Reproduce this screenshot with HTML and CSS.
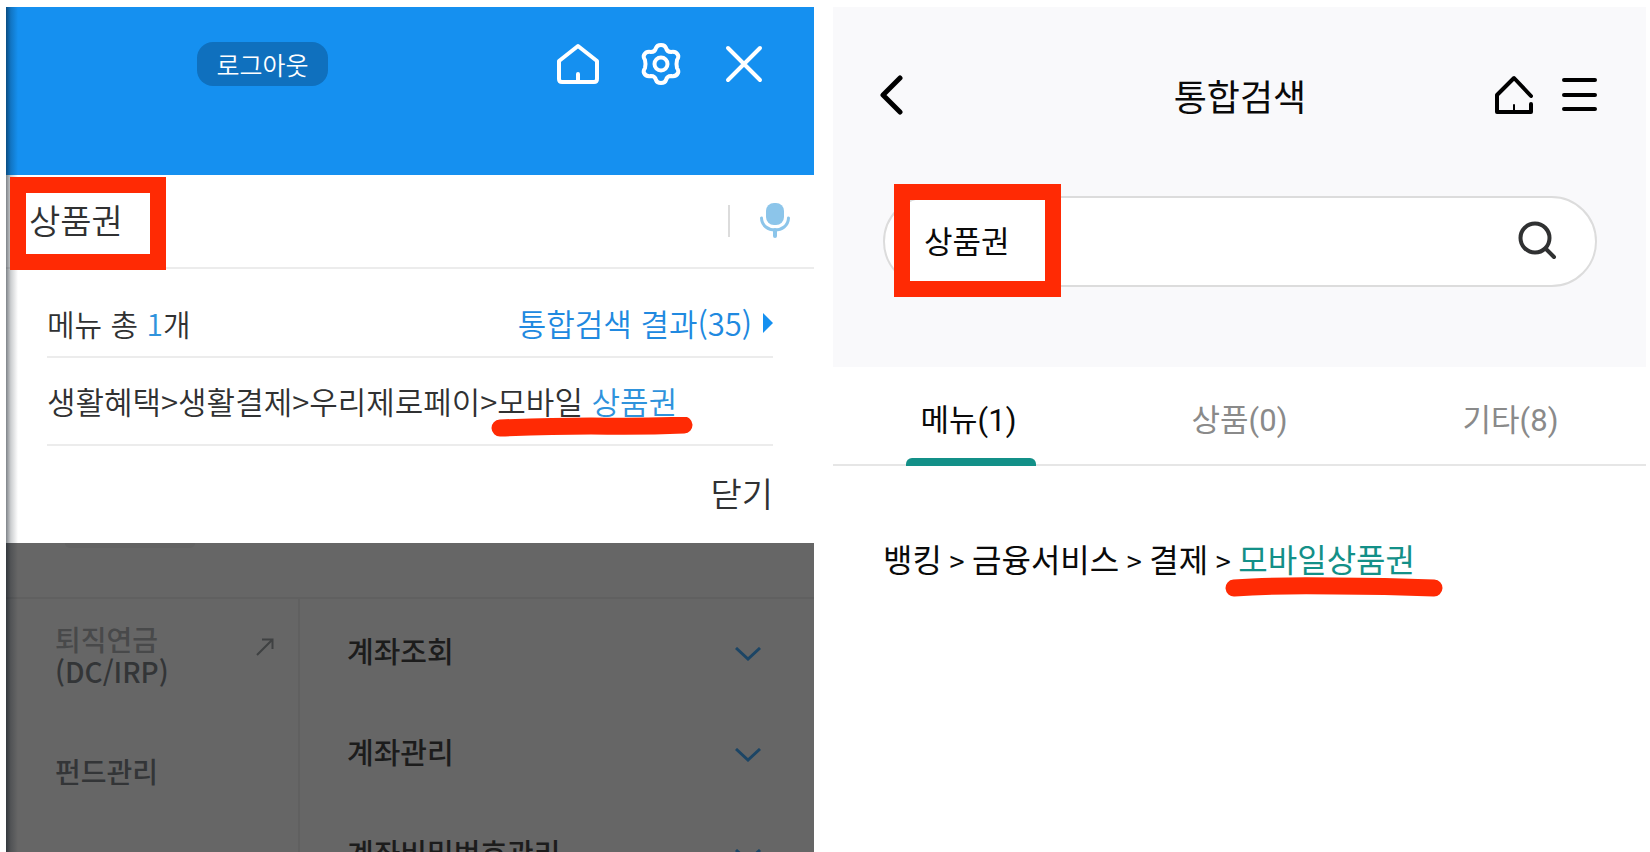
FILE: index.html
```
<!DOCTYPE html>
<html lang="ko">

<head>
    <meta charset="UTF-8">
    <meta name="viewport" content="width=device-width, initial-scale=1.0">
    <title>상품권 메뉴 검색</title>
    <link rel="stylesheet" href="styles.css">
</head>

<body>
    <div class="screens">
        <section class="screen menu-screen">
            <header class="menu-header">
                <button class="logout">로그아웃</button>
                <nav class="menu-icons">
                    <button class="icon-button" aria-label="홈">
                        <svg width="42" height="42" viewBox="0 0 42 42" fill="none" stroke="#fff" stroke-width="4" stroke-linecap="round" stroke-linejoin="round">
                            <path d="M21 3 L40 18 V36 Q40 39 37 39 H5 Q2 39 2 36 V18 Z M21 31 V38" />
                        </svg>
                    </button>
                    <button class="icon-button" aria-label="설정">
                        <svg width="42" height="42" viewBox="0 0 42 42" fill="none" stroke="#fff" stroke-width="4" stroke-linejoin="round">
                            <path d="M16 5 Q17 2 21 2 Q25 2 26 5 Q27 9 31 9 Q36 8 38 12 Q39 14 37 17 Q36 21 37 25 Q39 28 38 30 Q36 34 31 33 Q27 33 26 37 Q25 40 21 40 Q17 40 16 37 Q15 33 11 33 Q6 34 4 30 Q3 28 5 25 Q6 21 5 17 Q3 14 4 12 Q6 8 11 9 Q15 9 16 5 Z" />
                            <circle cx="21" cy="21" r="6.5" />
                        </svg>
                    </button>
                    <button class="icon-button" aria-label="닫기">
                        <svg width="42" height="42" viewBox="0 0 42 42" fill="none" stroke="#fff" stroke-width="4" stroke-linecap="round">
                            <path d="M5 5 L37 37 M37 5 L5 37" />
                        </svg>
                    </button>
                </nav>
            </header>

            <form class="menu-search">
                <input class="menu-input" type="text" value="상품권" aria-label="메뉴 검색">
                <button class="mic-button" type="button" aria-label="음성 검색">
                    <svg width="32" height="36" viewBox="0 0 32 36" fill="none" stroke="#8cc5ea" stroke-width="3" stroke-linecap="round">
                        <rect x="7" y="0" width="18" height="22" rx="8" fill="#8cc5ea" stroke="none" />
                        <path d="M2.500 15 C3 31 29 31 29.500 15" />
                        <path d="M16 27 V33" stroke-width="4" />
                    </svg>
                </button>
                <span class="mark-box menu-mark"></span>
            </form>

            <div class="menu-results">
                <div class="result-head">
                    <span class="menu-count">메뉴 총 <em>1</em>개</span>
                    <a class="total-link" href="#">통합검색 결과(35)
                        <svg width="10" height="20" viewBox="0 0 10 20" fill="#1590f0"><path d="M0 0 L10 10 L0 20 Z" /></svg>
                    </a>
                </div>
                <a class="result-path" href="#">생활혜택&gt;생활결제&gt;우리제로페이&gt;<span class="marked">모바일 <em>상품권</em>
                        <svg class="underline menu-underline" width="202" height="20" viewBox="0 0 202 20" fill="none" stroke="#ff2a04" stroke-width="17" stroke-linecap="round" stroke-linejoin="round">
                            <path d="M9 11 Q60 9 100 9 Q150 10 193 8" />
                        </svg></span></a>
                <div class="result-close">
                    <button class="close-text">닫기</button>
                </div>
            </div>

            <div class="dimmed">
                <div class="dimmed-top"></div>
                <div class="dimmed-body">
                    <ul class="categories">
                        <li><a href="#"><span class="faded">퇴직연금</span><br>(DC/IRP)</a>
                            <svg width="18" height="18" viewBox="0 0 18 18" fill="none" stroke="#3f4142" stroke-width="2"><path d="M1 17 L16 2 M6 1.500 H16.500 V11" /></svg>
                        </li>
                        <li><a href="#">펀드관리</a></li>
                    </ul>
                    <ul class="submenus">
                        <li><a href="#">계좌조회</a>
                            <svg width="26" height="14" viewBox="0 0 26 14" fill="none" stroke="#1c4565" stroke-width="3"><path d="M1 1 L13 12 L25 1" /></svg>
                        </li>
                        <li><a href="#">계좌관리</a>
                            <svg width="26" height="14" viewBox="0 0 26 14" fill="none" stroke="#1c4565" stroke-width="3"><path d="M1 1 L13 12 L25 1" /></svg>
                        </li>
                        <li><a href="#">계좌비밀번호관리</a>
                            <svg width="26" height="14" viewBox="0 0 26 14" fill="none" stroke="#1c4565" stroke-width="3"><path d="M1 1 L13 12 L25 1" /></svg>
                        </li>
                    </ul>
                </div>
            </div>
        </section>

        <section class="screen search-screen">
            <div class="search-top">
                <header class="search-header">
                    <button class="back-button" aria-label="뒤로">
                        <svg width="24" height="42" viewBox="0 0 24 42" fill="none" stroke="#000" stroke-width="5" stroke-linecap="round" stroke-linejoin="round">
                            <path d="M20 4 L3 21 L20 38" />
                        </svg>
                    </button>
                    <h1 class="search-title">통합검색</h1>
                    <nav class="search-icons">
                        <button class="icon-button" aria-label="홈">
                            <svg width="40" height="40" viewBox="0 0 40 40" fill="none" stroke="#000" stroke-width="4" stroke-linecap="round" stroke-linejoin="round">
                                <path d="M38 21 L21 3 L4 20 V37 H38 V29" />
                                <path d="M21 30 V36" stroke-width="2" />
                            </svg>
                        </button>
                        <button class="icon-button" aria-label="전체메뉴">
                            <svg width="36" height="40" viewBox="0 0 36 40" fill="none" stroke="#000" stroke-width="4" stroke-linecap="round">
                                <path d="M3 5 H34 M3 20 H34 M3 34 H34" />
                            </svg>
                        </button>
                    </nav>
                </header>
                <form class="search-box">
                    <input class="search-input" type="text" value="상품권" aria-label="통합검색">
                    <button class="icon-button" type="button" aria-label="검색">
                        <svg width="40" height="40" viewBox="0 0 40 40" fill="none" stroke="#303132" stroke-width="4" stroke-linecap="round">
                            <circle cx="18" cy="18" r="14.500" />
                            <path d="M29 29 L37 37" />
                        </svg>
                    </button>
                    <span class="mark-box search-mark"></span>
                </form>
            </div>
            <nav class="tabs">
                <button class="tab active">메뉴(1)</button>
                <button class="tab">상품(0)</button>
                <button class="tab">기타(8)</button>
            </nav>
            <a class="search-path" href="#">뱅킹<span class="sep"> &gt; </span>금융서비스<span class="sep"> &gt; </span>결제<span class="sep"> &gt; </span><span class="marked teal">모바일상품권
                    <svg class="underline search-underline" width="218" height="20" viewBox="0 0 218 20" fill="none" stroke="#ff2a04" stroke-width="17" stroke-linecap="round" stroke-linejoin="round">
                        <path d="M9 11 Q50 8 110 9 Q160 9 209 11" />
                    </svg></span></a>
        </section>
    </div>
</body>

</html>
```
FILE: styles.css
```
* {
    box-sizing: border-box;
}

body {
    margin: 0;
    font-family: "Noto Sans CJK KR", sans-serif;
    background: #fff;
    color: #303132;
}

button {
    font-family: inherit;
    padding: 0;
    border: none;
    background: none;
    cursor: pointer;
}

input {
    font-family: inherit;
    min-width: 0;
    border: none;
    outline: none;
    background: none;
}

a {
    color: inherit;
    text-decoration: none;
}

em {
    font-style: normal;
    color: #2f93dc;
}

svg {
    display: block;
}

ul {
    list-style: none;
    margin: 0;
    padding: 0;
}

.screens {
    display: grid;
    grid-template-columns: 808fr 813fr;
    gap: 19px;
    height: 100vh;
    padding: 7px 4px 0 6px;
    overflow: hidden;
}

.screen {
    position: relative;
    display: flex;
    flex-direction: column;
    min-width: 0;
    min-height: 0;
}

/* shadow on the left edge of the drawer */
.menu-screen::after {
    content: "";
    position: absolute;
    top: 0;
    bottom: 0;
    left: 0;
    width: 12px;
    background: linear-gradient(to right, rgba(0, 10, 20, 0.5), rgba(0, 10, 20, 0.2) 40%, transparent);
}

.menu-header {
    display: flex;
    justify-content: space-between;
    align-items: flex-start;
    height: 168px;
    padding: 35px 49px 0 191px;
    background: #1590f0;
}

.logout {
    width: 131px;
    height: 44px;
    border-radius: 16px;
    background: #0f70be;
    color: #fff;
    font-size: 25px;
    font-weight: 350;
    line-height: 44px;
}

.menu-icons {
    display: flex;
    align-items: center;
    gap: 41px;
    height: 44px;
}

.menu-search {
    position: relative;
    display: flex;
    align-items: center;
    height: 94px;
    padding: 0 23px;
    border-bottom: 2px solid #ececec;
}

.menu-input {
    flex: 1;
    padding: 0 0 4px;
    color: #303132;
    font-size: 34px;
    font-weight: 350;
}

.mic-button {
    padding-left: 29px;
    border-left: 2px solid #dcdcdc;
    height: 32px;
    display: flex;
    align-items: center;
}

.mark-box {
    position: absolute;
    border: 16px solid #ff2a04;
    pointer-events: none;
    z-index: 1;
}

.menu-mark {
    top: 2px;
    left: 4px;
    width: 156px;
    height: 93px;
}

.menu-results {
    padding: 0 41px;
    font-size: 31px;
    font-weight: 350;
    line-height: 46px;
}

.result-head {
    display: flex;
    justify-content: space-between;
    height: 89px;
    padding: 31px 0 0;
    border-bottom: 2px solid #ececec;
}

.menu-count {
    font-size: 30px;
}

.total-link {
    display: flex;
    align-items: center;
    gap: 11px;
    height: 46px;
    color: #2089e0;
}

.result-path {
    display: block;
    height: 88px;
    padding: 20px 0 0;
    border-bottom: 2px solid #ececec;
    white-space: nowrap;
}

.marked {
    position: relative;
}

.underline {
    position: absolute;
}

.menu-underline {
    top: 39px;
    left: -6px;
}

.result-close {
    display: flex;
    justify-content: flex-end;
    align-items: center;
    height: 97px;
    padding-bottom: 4px;
}

.close-text {
    color: #303132;
    font-size: 34px;
    font-weight: 350;
}

.dimmed {
    flex: 1;
    display: flex;
    flex-direction: column;
    min-height: 0;
    overflow: hidden;
    background: #666;
    font-size: 28px;
    font-weight: 500;
    line-height: 32px;
}

.dimmed-top {
    height: 56px;
    border-bottom: 2px solid #606060;
}

.dimmed-top::before {
    content: "";
    display: block;
    width: 130px;
    height: 5px;
    margin-left: 59px;
    border-radius: 0 0 65px 65px;
    background: #626262;
}

.dimmed-body {
    flex: 1;
    display: grid;
    grid-template-columns: 294px 1fr;
    min-height: 0;
}

.categories {
    padding: 24px 24px 0 49px;
    border-right: 2px solid #606060;
    color: #333537;
}

.categories li {
    display: flex;
    justify-content: space-between;
    margin-bottom: 68px;
}

.categories svg {
    margin-top: 15px;
}

.faded {
    color: #48494a;
}

.submenus {
    color: #1c1c1c;
    font-size: 29px;
}

.submenus li {
    display: flex;
    justify-content: space-between;
    align-items: center;
    height: 101px;
    padding: 0 53px 0 47px;
}

.submenus svg {
    margin-top: 8px;
}

.search-screen {
    color: #0a0a0a;
}

.search-top {
    height: 360px;
    padding: 60px 49px 0 50px;
    background: #f9f9fb;
}

.search-header {
    display: grid;
    grid-template-columns: 1fr auto 1fr;
    align-items: center;
    height: 56px;
}

.back-button {
    justify-self: start;
    margin-left: -3px;
}

.search-title {
    margin: 0;
    font-size: 36px;
    font-weight: 400;
    line-height: 56px;
}

.search-icons {
    display: flex;
    justify-content: flex-end;
    gap: 28px;
}

.search-box {
    position: relative;
    display: flex;
    align-items: center;
    height: 91px;
    margin-top: 73px;
    padding: 0 38px 4px 39px;
    border: 2px solid #dcdcdc;
    border-radius: 46px;
    background: #fff;
}

.search-input {
    flex: 1;
    padding: 0;
    color: #0a0a0a;
    font-size: 31px;
}

.search-mark {
    top: -14px;
    left: 9px;
    width: 167px;
    height: 113px;
}

.tabs {
    display: grid;
    grid-template-columns: repeat(3, 1fr);
    height: 99px;
    border-bottom: 2px solid #e6e6e6;
}

.tab {
    position: relative;
    padding-top: 4px;
    color: #8a8a8a;
    font-family: Roboto, "Noto Sans CJK KR", sans-serif;
    font-size: 31px;
}

.tab.active {
    color: #0a0a0a;
}

.tab.active::after {
    content: "";
    position: absolute;
    bottom: -2px;
    left: 50%;
    width: 130px;
    height: 8px;
    margin-left: -63px;
    border-radius: 6px 6px 0 0;
    background: #139088;
}

.search-path {
    padding: 69px 50px 0;
    font-size: 32px;
    line-height: 46px;
    white-space: nowrap;
}

.sep {
    font-size: 27px;
}

.teal {
    color: #139088;
}

.search-underline {
    top: 42px;
    left: -13px;
}
```
